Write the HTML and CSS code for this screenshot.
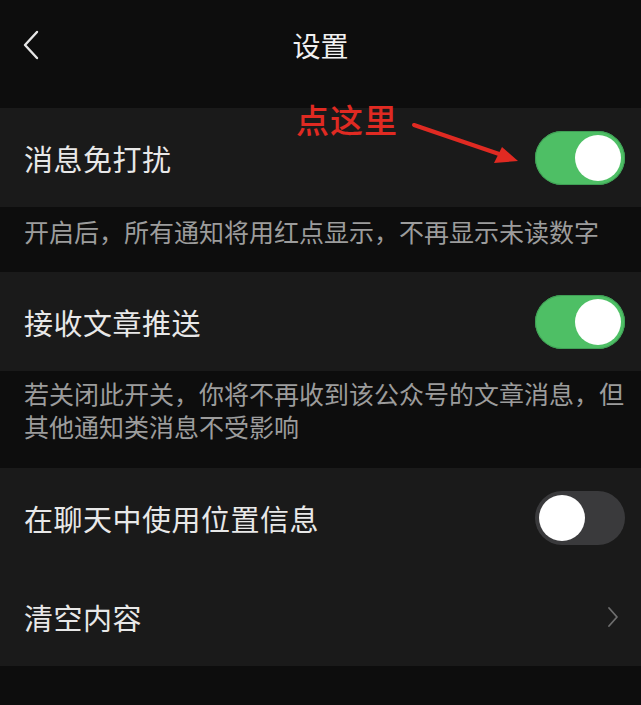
FILE: index.html
```html
<!DOCTYPE html>
<html lang="zh-CN">
<head>
  <meta charset="UTF-8">
  <meta name="viewport" content="width=device-width, initial-scale=1.0">
  <title>设置</title>
  <link rel="stylesheet" href="styles.css">
</head>
<body>
  <div class="page">
    <!-- Верхняя панель -->
    <div class="navbar">
      <svg class="back" width="18" height="30" viewBox="0 0 18 30">
        <path d="M15 2 L3 15 L15 28" fill="none" stroke="#e6e6e6" stroke-width="2.4" stroke-linecap="round" stroke-linejoin="round"/>
      </svg>
      <div class="title">设置</div>
    </div>

    <!-- Блок 1 -->
    <div class="group">
      <div class="row">
        <span class="label">消息免打扰</span>
        <div class="switch on"><div class="knob"></div></div>
      </div>
      <div class="hint">
        <span class="hint-text">点这里</span>
        <svg class="hint-arrow" width="120" height="50" viewBox="0 0 120 50">
          <path d="M4 6 L92 36" stroke="#e02a22" stroke-width="4" stroke-linecap="round"/>
          <path d="M108 42 L84 44 L92 28 Z" fill="#e02a22"/>
        </svg>
      </div>
    </div>
    <div class="desc">开启后，所有通知将用红点显示，不再显示未读数字</div>

    <!-- Блок 2 -->
    <div class="group">
      <div class="row">
        <span class="label">接收文章推送</span>
        <div class="switch on"><div class="knob"></div></div>
      </div>
    </div>
    <div class="desc tall">若关闭此开关，你将不再收到该公众号的文章消息，但其他通知类消息不受影响</div>

    <!-- Блок 3 -->
    <div class="group">
      <div class="row">
        <span class="label">在聊天中使用位置信息</span>
        <div class="switch"><div class="knob"></div></div>
      </div>
      <div class="row">
        <span class="label">清空内容</span>
        <svg class="more" width="12" height="22" viewBox="0 0 12 22">
          <path d="M2 2 L10 11 L2 20" fill="none" stroke="#6e6e6e" stroke-width="1.8" stroke-linecap="round" stroke-linejoin="round"/>
        </svg>
      </div>
    </div>
  </div>
</body>
</html>
```

FILE: styles.css
```css
* { box-sizing: border-box; }
html, body {
  margin: 0; padding: 0;
  width: 100%; height: 100%;
  overflow: hidden;
}
body {
  background: #0d0d0d;
  color: #e8e8e8;
  font-family: "Noto Sans CJK SC", "Noto Sans", sans-serif;
}
.page { width: 641px; }

/* Верхняя панель с заголовком */
.navbar {
  position: relative;
  height: 90px;
  margin-bottom: 18px;
  display: flex;
  align-items: center;
  justify-content: center;
}
.back { position: absolute; left: 22px; top: 30px; }
.title { font-size: 28px; color: #f0f0f0; }

/* Карточка с настройками */
.group {
  position: relative;
  background: #1a1a1a;
}
.row {
  height: 99px;
  padding: 0 16px 0 24px;
  display: flex;
  align-items: center;
  justify-content: space-between;
}
.label { font-size: 29px; letter-spacing: 0.5px; }

/* Переключатель */
.switch {
  width: 90px;
  height: 54px;
  border-radius: 27px;
  background: #3a3a3c;
  padding: 4px;
  display: flex;
  justify-content: flex-start;
}
.switch.on {
  background: #4ebf65;
  justify-content: flex-end;
  box-shadow: inset 0 0 0 1px #3f9f55;
}
.knob {
  width: 46px;
  height: 46px;
  border-radius: 50%;
  background: #fff;
}
.more { margin-right: 6px; }

/* Пояснения под карточками */
.desc {
  padding: 8px 16px 24px 24px;
  font-size: 25px;
  line-height: 33px;
  color: #9c9c9c;
}
.desc.tall { padding-top: 6px; padding-bottom: 25px; }

/* Подсказка поверх первой строки */
.hint { position: absolute; left: 296px; top: -13px; }
.hint-text {
  display: block;
  font-size: 33px;
  font-weight: 500;
  color: #e02a22;
  letter-spacing: 1px;
}
.hint-arrow { position: absolute; left: 114px; top: 24px; }
```
